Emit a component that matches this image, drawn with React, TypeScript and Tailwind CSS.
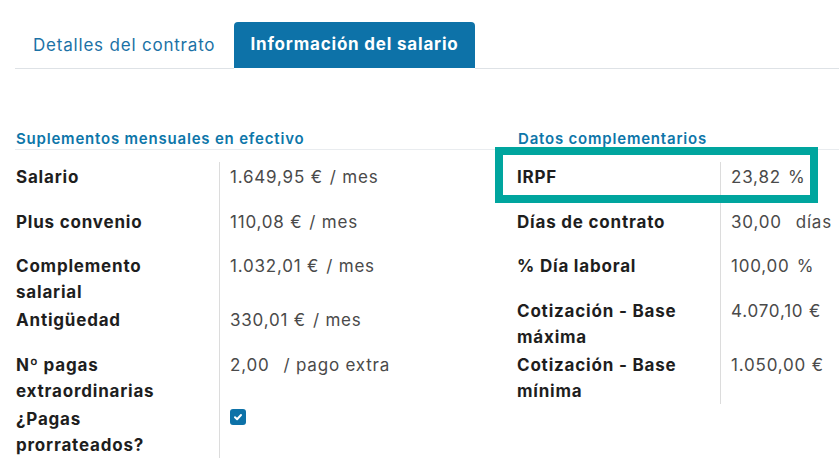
import React from 'react';

interface Row {
  label: string[];
  value?: string;
  unit?: string;
  gap?: string;
  check?: boolean;
}

const left: Row[] = [
  { label: ['Salario'], value: '1.649,95 €', unit: '/ mes' },
  { label: ['Plus convenio'], value: '110,08 €', unit: '/ mes' },
  { label: ['Complemento', 'salarial'], value: '1.032,01 €', unit: '/ mes' },
  { label: ['Antigüedad'], value: '330,01 €', unit: '/ mes' },
  { label: ['Nº pagas', 'extraordinarias'], value: '2,00', unit: '/ pago extra', gap: 'ml-[14px]' },
  { label: ['¿Pagas', 'prorrateados?'], check: true },
];

const right: Row[] = [
  { label: ['IRPF'], value: '23,82', unit: '%' },
  { label: ['Días de contrato'], value: '30,00', unit: 'días', gap: 'ml-[14px]' },
  { label: ['% Día laboral'], value: '100,00', unit: '%' },
  { label: ['Cotización - Base', 'máxima'], value: '4.070,10 €' },
  { label: ['Cotización - Base', 'mínima'], value: '1.050,00 €' },
];

const FieldRow: React.FC<{ row: Row }> = ({ row }) => (
  <div className="flex min-h-[44.5px]">
    <div className="w-[204px] shrink-0 pl-px pt-[2px] font-bold text-[#1e1e1e] text-[17px] leading-[26px]">
      {row.label.map((l) => (
        <div key={l}>{l}</div>
      ))}
    </div>
    <div className="border-l border-[#dcdcdc] pl-[10px] pt-[2px] text-[17px] leading-[26px] text-[#4a4a4a]">
      {row.check ? (
        <div className="mt-[3px] w-4 h-4 rounded-[3px] bg-[#0d72a8] flex items-center justify-center">
          <svg width="10" height="10" viewBox="0 0 10 10">
            <path d="M2 5.2 L4.1 7.2 L8 3" stroke="white" strokeWidth="2" fill="none" strokeLinecap="round" strokeLinejoin="round" />
          </svg>
        </div>
      ) : (
        <div className="whitespace-nowrap">
          <span>{row.value}</span>
          {row.unit && <span className={row.gap ?? 'ml-[7px]'}>{row.unit}</span>}
        </div>
      )}
    </div>
  </div>
);

export default function App() {
  return (
    <div
      className="relative w-[839px] h-[475px] overflow-hidden bg-white tracking-[0.05em]"
      style={{ fontFamily: 'Inter, "Open Sans", sans-serif' }}
    >
      <div className="pt-[22px] pl-[15px]">
        <div className="flex items-end border-b border-[#dee2e6] h-[47px]">
          <div className="w-[219px] pl-[18px] pb-[10px] text-[17px] text-[#1b72a6]">Detalles del contrato</div>
          <div className="-mb-px h-[47px] w-[241px] rounded-t-[4px] bg-[#0d72a8] border-b border-white flex items-center justify-center text-[17px] font-bold text-white">
            <span className="-mt-[1px]">Información del salario</span>
          </div>
        </div>
      </div>

      <div className="mt-[58px] ml-[15px] border-b border-[#e9ecef] flex h-[23px]">
        <div className="w-[501px] pl-px pt-[2px] text-[15px] font-semibold text-[#0d76a9] leading-[20px]">
          Suplementos mensuales en efectivo
        </div>
        <div className="pl-[2px] pt-[2px] text-[15px] font-semibold text-[#0d76a9] leading-[20px]">
          Datos complementarios
        </div>
      </div>

      <div className="mt-[12px] ml-[15px] flex">
        <div className="w-[501px] flex flex-col">
          {left.map((r) => (
            <FieldRow key={r.label[0]} row={r} />
          ))}
        </div>
        <div className="flex flex-col">
          {right.map((r) => (
            <FieldRow key={r.label.join()} row={r} />
          ))}
        </div>
      </div>

      <div className="absolute left-[495px] top-[147px] w-[323px] h-[56px] border-[8px] border-[#00a59e]" />
    </div>
  );
}
